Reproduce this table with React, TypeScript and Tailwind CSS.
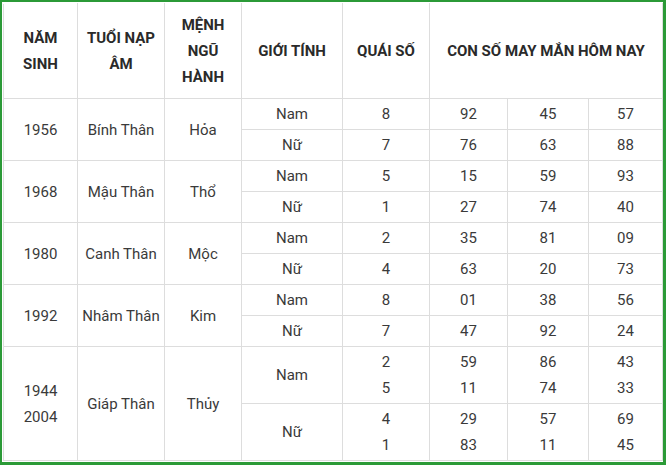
const groups = [
  {
    years: ["1956"],
    tuoi: "Bính Thân",
    menh: "Hỏa",
    rows: [
      { gt: "Nam", qs: ["8"], nums: [["92"], ["45"], ["57"]] },
      { gt: "Nữ", qs: ["7"], nums: [["76"], ["63"], ["88"]] },
    ],
  },
  {
    years: ["1968"],
    tuoi: "Mậu Thân",
    menh: "Thổ",
    rows: [
      { gt: "Nam", qs: ["5"], nums: [["15"], ["59"], ["93"]] },
      { gt: "Nữ", qs: ["1"], nums: [["27"], ["74"], ["40"]] },
    ],
  },
  {
    years: ["1980"],
    tuoi: "Canh Thân",
    menh: "Mộc",
    rows: [
      { gt: "Nam", qs: ["2"], nums: [["35"], ["81"], ["09"]] },
      { gt: "Nữ", qs: ["4"], nums: [["63"], ["20"], ["73"]] },
    ],
  },
  {
    years: ["1992"],
    tuoi: "Nhâm Thân",
    menh: "Kim",
    rows: [
      { gt: "Nam", qs: ["8"], nums: [["01"], ["38"], ["56"]] },
      { gt: "Nữ", qs: ["7"], nums: [["47"], ["92"], ["24"]] },
    ],
  },
  {
    years: ["1944", "2004"],
    tuoi: "Giáp Thân",
    menh: "Thủy",
    rows: [
      { gt: "Nam", qs: ["2", "5"], nums: [["59", "11"], ["86", "74"], ["43", "33"]] },
      { gt: "Nữ", qs: ["4", "1"], nums: [["29", "83"], ["57", "11"], ["69", "45"]] },
    ],
  },
];

function Lines({ items }: { items: string[] }) {
  return (
    <>
      {items.map((t, i) => (
        <div key={i}>{t}</div>
      ))}
    </>
  );
}

export default function App() {
  const cell = "border border-[#dddddd] text-center align-middle p-0";
  return (
    <div
      className="w-[666px] h-[465px] bg-white border-t-2 border-l-2 border-r-[3px] border-b-[3px] border-[#2b9a37] p-px"
      style={{ fontFamily: "Roboto, 'Liberation Sans', sans-serif" }}
    >
      <table className="table-fixed border-collapse w-[659px] text-[15px] leading-[26px] text-[#3a3a3a]">
        <colgroup>
          <col className="w-[74px]" />
          <col className="w-[87px]" />
          <col className="w-[77px]" />
          <col className="w-[101px]" />
          <col className="w-[87px]" />
          <col className="w-[78px]" />
          <col className="w-[81px]" />
          <col className="w-[74px]" />
        </colgroup>
        <thead>
          <tr className="h-[95px] font-bold text-[#2a2a2a]">
            <th className={`${cell} border-t-white`}>
              NĂM
              <br />
              SINH
            </th>
            <th className={`${cell} border-t-white`}>
              TUỔI NẠP
              <br />
              ÂM
            </th>
            <th className={`${cell} border-t-white`}>
              MỆNH
              <br />
              NGŨ
              <br />
              HÀNH
            </th>
            <th className={`${cell} border-t-white`}>GIỚI TÍNH</th>
            <th className={`${cell} border-t-white`}>QUÁI SỐ</th>
            <th colSpan={3} className={`${cell} border-t-white`}>
              CON SỐ MAY MẮN HÔM NAY
            </th>
          </tr>
        </thead>
        <tbody>
          {groups.map((g) =>
            g.rows.map((r, ri) => (
              <tr
                key={g.tuoi + ri}
                className={g.years.length > 1 ? "h-[57px]" : "h-[31px]"}
              >
                {ri === 0 && (
                  <>
                    <td rowSpan={2} className={cell}>
                      <Lines items={g.years} />
                    </td>
                    <td rowSpan={2} className={cell}>
                      {g.tuoi}
                    </td>
                    <td rowSpan={2} className={cell}>
                      {g.menh}
                    </td>
                  </>
                )}
                <td className={cell}>{r.gt}</td>
                <td className={cell}>
                  <Lines items={r.qs} />
                </td>
                {r.nums.map((n, ni) => (
                  <td key={ni} className={cell}>
                    <Lines items={n} />
                  </td>
                ))}
              </tr>
            ))
          )}
        </tbody>
      </table>
    </div>
  );
}
